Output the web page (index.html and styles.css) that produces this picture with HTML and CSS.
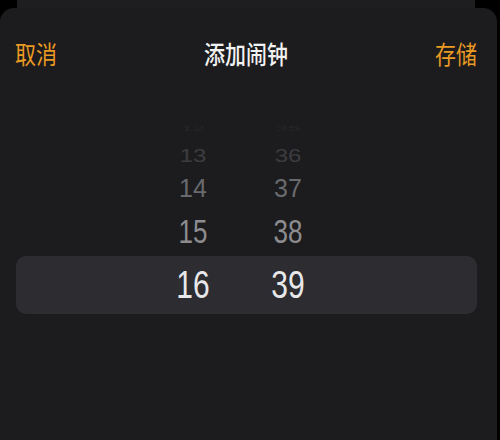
FILE: index.html
```html
<!DOCTYPE html>
<html lang="zh-CN">
<head>
<meta charset="utf-8">
<title>添加闹钟</title>
<link rel="stylesheet" href="styles.css">
</head>
<body>
<div class="screen">
  <div class="backcard"></div>
  <div class="sheet">
    <header class="nav">
      <span class="nav-btn"><span class="txt">取消</span></span>
      <span class="nav-title"><span class="txt">添加闹钟</span></span>
      <span class="nav-btn"><span class="txt">存储</span></span>
    </header>
    <div class="picker">
      <div class="row r12"><span class="cell"><span class="num">12</span></span><span class="cell"><span class="num">35</span></span></div>
      <div class="row r13"><span class="cell"><span class="num">13</span></span><span class="cell"><span class="num">36</span></span></div>
      <div class="row r14"><span class="cell"><span class="num">14</span></span><span class="cell"><span class="num">37</span></span></div>
      <div class="row r15"><span class="cell"><span class="num">15</span></span><span class="cell"><span class="num">38</span></span></div>
      <div class="row r16 selected"><span class="cell"><span class="num">16</span></span><span class="cell"><span class="num">39</span></span></div>
    </div>
  </div>
</div>
</body>
</html>
```
FILE: styles.css
```css
* { box-sizing: border-box; }
html, body {
  margin: 0;
  padding: 0;
  background: #000;
}
.screen {
  width: 500px;
  height: 440px;
  overflow: hidden;
  background: #000;
  display: flex;
  flex-direction: column;
}
.backcard {
  height: 8px;
  margin: 0 25px 0 17px;
  background: #1e1e20;
  flex: none;
}
.sheet {
  flex: 1;
  width: 497px;
  background: #1c1c1e;
  border-radius: 14px 14px 0 0;
  font-family: "Noto Sans CJK SC", "Noto Sans", sans-serif;
}
.nav {
  display: flex;
  justify-content: space-between;
  align-items: center;
  padding: 32px 20px 0 15px;
  height: 58px;
  line-height: 26px;
  font-size: 21px;
}
.txt {
  display: inline-block;
  transform: scaleY(1.2);
}
.nav-btn {
  color: #eb9a22;
}
.nav-title {
  color: #f2f2f2;
  font-weight: 500;
}
.picker {
  margin-top: 53px;
  font-family: "Liberation Sans", Arial, sans-serif;
}
.row {
  display: flex;
  gap: 35px;
  padding-left: 163px;
  align-items: center;
}
.cell {
  width: 60px;
  text-align: center;
}
.num {
  display: inline-block;
}
.r12 {
  height: 20px;
  font-size: 22px;
  color: #252528;
  overflow: hidden;
}
.r12 .num { transform: scaleY(0.3); }
.r13 {
  height: 28px;
  font-size: 24px;
  color: #3c3c40;
  overflow: hidden;
  align-items: flex-end;
}
.r13 .num {
  transform: scaleY(0.78);
  transform-origin: bottom;
  line-height: 26px;
}
.r14 {
  height: 41px;
  font-size: 25px;
  color: #6a6a6e;
}
.r14 .num { transform: scaleY(1.06); }
.r15 {
  height: 48px;
  font-size: 26px;
  color: #8c8c90;
}
.r15 .num { transform: scaleY(1.28); }
.r16 {
  height: 58px;
  font-size: 30px;
  color: #e8e8ea;
}
.r16 .num { transform: scaleY(1.28); }
.selected {
  margin: 0 20px 0 16px;
  padding-left: 147px;
  background: #2c2c31;
  border-radius: 10px;
}
```
